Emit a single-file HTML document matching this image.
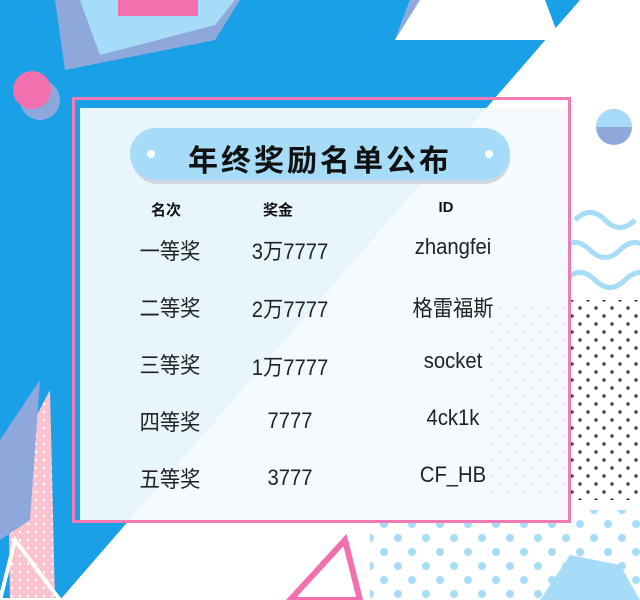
<!DOCTYPE html>
<html><head><meta charset="utf-8"><style>
body{margin:0;width:640px;height:600px;overflow:hidden;position:relative;font-family:"Liberation Sans","Noto Sans CJK SC",sans-serif;background:#fff}
.t{position:absolute;font-size:22px;color:#222;transform:translateX(-50%) scaleX(0.92);white-space:nowrap}
.h{position:absolute;font-size:15px;font-weight:bold;color:#111;transform:translateX(-50%)}
</style></head><body>
<svg width="640" height="600" style="position:absolute;left:0;top:0">
<defs>
<pattern id="dk" width="16" height="16" patternUnits="userSpaceOnUse"><circle cx="4" cy="4" r="1.8" fill="#444"/><circle cx="12" cy="12" r="1.8" fill="#444"/></pattern>
<pattern id="lb" width="28" height="28" patternUnits="userSpaceOnUse"><circle cx="6" cy="6" r="4" fill="#a6dcf8"/><circle cx="20" cy="20" r="4" fill="#a6dcf8"/></pattern>
<pattern id="pk" width="8" height="8" patternUnits="userSpaceOnUse"><rect width="8" height="8" fill="#fbc3d0"/><circle cx="4" cy="4" r="1.2" fill="#fff"/></pattern>
</defs>
<polygon points="0,0 580,0 60,600 0,600" fill="#1aa0e6"/>
<polygon points="410,0 545,0 560,40 395,40" fill="#fff"/>
<polygon points="395,40 420,0 410,0" fill="#8fa8dc"/>
<polygon points="55,0 240,0 215,40 65,70" fill="#8fa8dc"/>
<polygon points="80,0 235,0 215,25 100,55" fill="#a6dcf8"/>
<rect x="118" y="0" width="80" height="16" fill="#f36fae"/>
<circle cx="40" cy="100" r="20" fill="#8fa8dc"/><circle cx="32" cy="90" r="19" fill="#f36fae"/>
<circle cx="614" cy="127" r="18" fill="#8fa8dc"/><path d="M596,127 a18,18 0 0 1 36,0z" fill="#a6dcf8"/>
<rect x="490" y="300" width="150" height="200" fill="url(#dk)"/>
<rect x="370" y="510" width="270" height="90" fill="url(#lb)"/>
<polygon points="8,470 50,390 55,600 10,600" fill="url(#pk)"/>
<polygon points="0,440 40,380 30,520 0,540" fill="#8fa8dc"/>
<polygon points="290,600 345,540 360,600" fill="none" stroke="#f36fae" stroke-width="6"/>
<polygon points="540,600 570,555 620,565 640,600" fill="#a6dcf8"/>
<path d="M560,250 q15,-15 30,0 t30,0 t30,0 M565,280 q15,-15 30,0 t30,0 t30,0 M575,220 q15,-15 30,0 t30,0" fill="none" stroke="#a6dcf8" stroke-width="5"/>
<polygon points="0,600 15,540 60,600" fill="none" stroke="#fff" stroke-width="4"/>
<rect x="80" y="108" width="488" height="412" fill="#f3fafe" opacity="0.95"/>
<rect x="73.5" y="98.5" width="496" height="423" fill="none" stroke="#f27bb4" stroke-width="3"/>
<rect x="132" y="132" width="378" height="52" rx="26" fill="#cfd8e0"/>
<rect x="130" y="128" width="380" height="52" rx="26" fill="#a6dcf8"/>
<circle cx="151" cy="154" r="4" fill="#fff"/><circle cx="489" cy="154" r="4" fill="#fff"/>
</svg>
<div style="position:absolute;left:0;width:640px;top:136px;text-align:center;font-size:30px;font-weight:bold;letter-spacing:3px;color:#111">年终奖励名单公布</div>
<div class="h" style="left:166px;top:199px">名次</div>
<div class="h" style="left:278px;top:199px">奖金</div>
<div class="h" style="left:446px;top:199px">ID</div>
<div class="t" style="left:170px;top:234px">一等奖</div><div class="t" style="left:290px;top:234px">3万7777</div><div class="t" style="left:453px;top:234px">zhangfei</div>
<div class="t" style="left:170px;top:291px">二等奖</div><div class="t" style="left:290px;top:292px">2万7777</div><div class="t" style="left:453px;top:291px">格雷福斯</div>
<div class="t" style="left:170px;top:348px">三等奖</div><div class="t" style="left:290px;top:350px">1万7777</div><div class="t" style="left:453px;top:348px">socket</div>
<div class="t" style="left:170px;top:405px">四等奖</div><div class="t" style="left:290px;top:408px">7777</div><div class="t" style="left:453px;top:405px">4ck1k</div>
<div class="t" style="left:170px;top:462px">五等奖</div><div class="t" style="left:290px;top:465px">3777</div><div class="t" style="left:453px;top:462px">CF_HB</div>
</body></html>
